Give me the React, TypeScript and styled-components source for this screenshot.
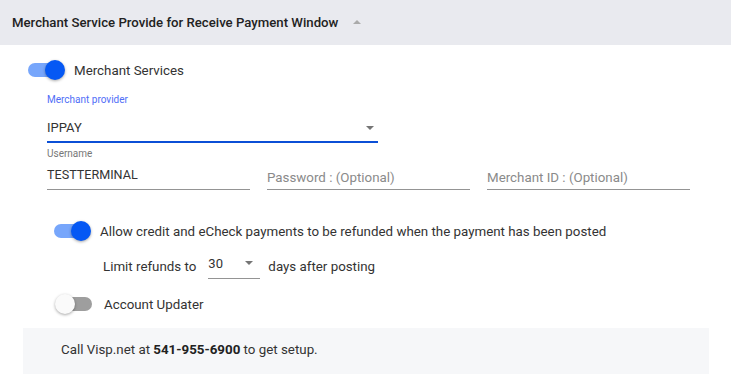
import styled, { createGlobalStyle } from "styled-components";

const GlobalStyle = createGlobalStyle`
  body {
    margin: 0;
    background: #fff;
    font-family: Roboto, "Liberation Sans", Arial, sans-serif;
    color: #333;
  }
`;

const Wrap = styled.div`
  width: 731px;
  height: 374px;
  overflow: hidden;
  background: #fff;
`;

const Header = styled.div`
  height: 45px;
  background: #e9eaef;
  display: flex;
  align-items: center;
  padding-left: 12px;
  box-sizing: border-box;
`;

const Title = styled.h4`
  margin: 0;
  font-size: 13.2px;
  font-weight: 500;
  color: #222;
`;

const Caret = styled.span<{ $up?: boolean; $color?: string }>`
  display: inline-block;
  width: 0;
  height: 0;
  border-left: 4px solid transparent;
  border-right: 4px solid transparent;
  ${(p) =>
    p.$up
      ? `border-bottom: 4px solid ${p.$color || "#aaa"};`
      : `border-top: 4px solid ${p.$color || "#757575"};`}
`;

const HeaderCaret = styled(Caret)`
  margin-left: 15px;
  margin-top: -1px;
`;

const Content = styled.div`
  display: flex;
  flex-direction: column;
  padding-left: 25px;
`;

const SwitchRow = styled.div<{ $indent: number; $top: number; $gap: number }>`
  display: flex;
  align-items: center;
  height: 20px;
  margin-left: ${(p) => p.$indent}px;
  margin-top: ${(p) => p.$top}px;
  gap: ${(p) => p.$gap}px;
`;

const SwitchBox = styled.span`
  position: relative;
  width: 40px;
  height: 20px;
  flex-shrink: 0;
`;

const Track = styled.span<{ $on: boolean }>`
  position: absolute;
  left: 3px;
  top: 3px;
  width: 34px;
  height: 14px;
  border-radius: 7px;
  background: ${(p) => (p.$on ? "#77a6fb" : "#9e9e9e")};
`;

const Thumb = styled.span<{ $on: boolean }>`
  position: absolute;
  top: 0;
  left: ${(p) => (p.$on ? 20 : 0)}px;
  width: 20px;
  height: 20px;
  border-radius: 50%;
  background: ${(p) => (p.$on ? "#0558f4" : "#fafafa")};
  box-shadow: 0 1px 3px rgba(0, 0, 0, 0.35);
`;

const SwitchLabel = styled.span`
  font-size: 13.33px;
  color: #333;
`;

const ProviderField = styled.div`
  display: flex;
  flex-direction: column;
  margin-left: 22px;
  margin-top: 14px;
  width: 331px;
`;

const FloatLabel = styled.label<{ $active?: boolean }>`
  font-size: 10px;
  line-height: 12px;
  color: ${(p) => (p.$active ? "#4f6ef7" : "#777")};
`;

const SelectBox = styled.div<{ $active?: boolean }>`
  display: flex;
  align-items: center;
  justify-content: space-between;
  height: 27px;
  padding-top: 3px;
  padding-right: 4px;
  margin-top: 5px;
  font-size: 13px;
  color: #333;
  border-bottom: ${(p) => (p.$active ? "2px solid #0b4fd6" : "1px solid #949494")};
`;

const FieldRow = styled.div`
  display: flex;
  align-items: flex-end;
  gap: 17px;
  margin-left: 22px;
  margin-top: 5px;
`;

const Field = styled.div`
  display: flex;
  flex-direction: column;
  width: 203px;
`;

const InputLine = styled.div<{ $placeholder?: boolean }>`
  height: 30px;
  display: flex;
  align-items: center;
  padding-top: ${(p) => (p.$placeholder ? 5 : 0)}px;
  box-sizing: border-box;
  font-size: ${(p) => (p.$placeholder ? 13.33 : 12.6)}px;
  color: ${(p) => (p.$placeholder ? "#8a8a8a" : "#333")};
  border-bottom: 1px solid #949494;
`;

const LimitRow = styled.div`
  display: flex;
  align-items: center;
  height: 26px;
  margin-left: 78px;
  margin-top: 12px;
  font-size: 13.33px;
  color: #333;
`;

const SmallSelect = styled.div`
  display: flex;
  align-items: center;
  justify-content: space-between;
  width: 52px;
  height: 26px;
  margin: 0 8px 0 12px;
  padding: 0 7px 5px 0;
  box-sizing: border-box;
  align-self: flex-end;
  border-bottom: 1px solid #949494;
  font-size: 13px;
`;

const Footer = styled.div`
  margin: 14px 22px 0 23px;
  height: 50px;
  background: #f6f7f9;
  padding: 14px 0 0 38px;
  box-sizing: border-box;
  font-size: 13.33px;
  line-height: 16px;
  color: #333;

  b {
    font-weight: 700;
    color: #222;
  }
`;

function Switch({ on }: { on: boolean }) {
  return (
    <SwitchBox>
      <Track $on={on} />
      <Thumb $on={on} />
    </SwitchBox>
  );
}

export default function App() {
  return (
    <Wrap>
      <GlobalStyle />
      <Header>
        <Title>Merchant Service Provide for Receive Payment Window</Title>
        <HeaderCaret $up />
      </Header>
      <Content>
        <SwitchRow $indent={0} $top={15} $gap={9}>
          <Switch on />
          <SwitchLabel>Merchant Services</SwitchLabel>
        </SwitchRow>

        <ProviderField>
          <FloatLabel $active>Merchant provider</FloatLabel>
          <SelectBox $active>
            <span>IPPAY</span>
            <Caret />
          </SelectBox>
        </ProviderField>

        <FieldRow>
          <Field>
            <FloatLabel>Username</FloatLabel>
            <InputLine>TESTTERMINAL</InputLine>
          </Field>
          <Field>
            <InputLine $placeholder>Password : (Optional)</InputLine>
          </Field>
          <Field>
            <InputLine $placeholder>Merchant ID : (Optional)</InputLine>
          </Field>
        </FieldRow>

        <SwitchRow $indent={26} $top={31} $gap={9}>
          <Switch on />
          <SwitchLabel>
            Allow credit and eCheck payments to be refunded when the payment has been posted
          </SwitchLabel>
        </SwitchRow>

        <LimitRow>
          <span>Limit refunds to</span>
          <SmallSelect>
            <span>30</span>
            <Caret />
          </SmallSelect>
          <span>days after posting</span>
        </LimitRow>

        <SwitchRow $indent={30} $top={15} $gap={9}>
          <Switch on={false} />
          <SwitchLabel>Account Updater</SwitchLabel>
        </SwitchRow>
      </Content>
      <Footer>
        Call Visp.net at <b>541-955-6900</b> to get setup.
      </Footer>
    </Wrap>
  );
}
